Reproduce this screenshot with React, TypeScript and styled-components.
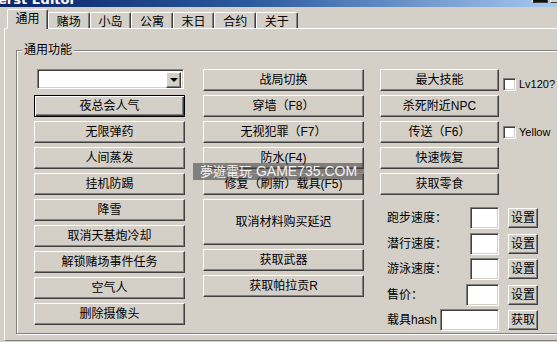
import styled, { createGlobalStyle, css } from "styled-components";

const GlobalStyle = createGlobalStyle`
  html, body {
    margin: 0;
    padding: 0;
    background: #d4d0c8;
    overflow: hidden;
  }
  body {
    font-family: "Liberation Sans", "Noto Sans CJK SC", sans-serif;
    font-size: 12px;
    color: #000;
  }
  * { box-sizing: border-box; }
`;

const cjk = `"Liberation Sans", "Noto Sans CJK SC", sans-serif`;

const Window = styled.div`
  position: relative;
  width: 557px;
  height: 342px;
  overflow: hidden;
  background: #d4d0c8;
  display: flex;
  flex-direction: column;
`;

const TitleBar = styled.div`
  flex: none;
  height: 7px;
  display: flex;
  overflow: hidden;
  background: linear-gradient(to right, #0a246a 0%, #2c5aa0 45%, #a6caf0 100%);
`;

const TitleText = styled.span`
  margin-top: -7px;
  margin-left: -2px;
  color: #fff;
  font: bold 13px/13px "DejaVu Sans", sans-serif;
  white-space: nowrap;
`;

const Captions = styled.div`
  margin-left: auto;
  margin-right: -9px;
  margin-top: -11px;
  display: flex;
  gap: 2px;
`;

const CaptionButton = styled.div<{ $dark?: boolean }>`
  width: 16px;
  height: 14px;
  background: ${(p) => (p.$dark ? "#101010" : "#d4d0c8")};
  border: 1px solid;
  border-color: #fff #404040 #404040 #fff;
`;

const Body = styled.div`
  flex: 1;
  display: flex;
  flex-direction: column;
  padding-left: 4px;
  margin-top: 2px;
`;

const TabStrip = styled.div`
  flex: none;
  height: 19px;
  display: flex;
  align-items: flex-end;
  padding-left: 3px;
`;

const Tab = styled.div<{ $active?: boolean }>`
  width: 41.6px;
  height: 16px;
  display: flex;
  align-items: center;
  justify-content: center;
  font: 12px/12px ${cjk};
  background: #d4d0c8;
  border-top: 1px solid #fff;
  border-left: 1px solid #fff;
  border-right: 1px solid #404040;
  box-shadow: inset -1px 0 0 #808080;
  border-radius: 2px 2px 0 0;
  padding-top: 2px;
  ${(p) =>
    p.$active &&
    css`
      width: 41px;
      height: 20px;
      margin-bottom: -1px;
      padding-top: 0;
      padding-bottom: 2px;
      position: relative;
      z-index: 1;
    `}
`;

const Panel = styled.div`
  flex: 1;
  margin-bottom: 1px;
  padding: 15px 0 0 11px;
  border-top: 1px solid #fff;
  border-left: 1px solid #fff;
  border-bottom: 1px solid #808080;
`;

const Group = styled.fieldset`
  margin: 0;
  padding: 13px 0 0 0;
  width: 640px;
  height: 290px;
  min-width: 0;
  border: 1px solid #808080;
  box-shadow: 1px 1px 0 #fff, inset 1px 1px 0 #fff;
`;

const Legend = styled.legend`
  margin-left: 5px;
  padding: 0 2px;
  font: 12px/12px ${cjk};
  background: #d4d0c8;
`;

const Columns = styled.div`
  display: flex;
  align-items: flex-start;
  padding-left: 17px;
`;

const Column = styled.div<{ $width: number; $offset?: number }>`
  width: ${(p) => p.$width}px;
  margin-left: ${(p) => p.$offset ?? 0}px;
  display: flex;
  flex-direction: column;
  gap: 4px;
`;

const raised = css`
  background: #d4d0c8;
  border: 1px solid;
  border-color: #fff #404040 #404040 #fff;
  box-shadow: inset -1px -1px 0 #808080;
`;

const sunken = css`
  background: #fff;
  border: 1px solid;
  border-color: #808080 #fff #fff #808080;
  box-shadow: inset 1px 1px 0 #404040, inset -1px -1px 0 #d4d0c8;
`;

const Button = styled.button<{ $default?: boolean; $tall?: boolean }>`
  ${raised};
  width: 100%;
  height: ${(p) => (p.$tall ? 46 : 22)}px;
  padding: 0;
  font: 12px/12px ${cjk};
  color: #000;
  white-space: nowrap;
  ${(p) =>
    p.$default &&
    css`
      border-color: #000;
      box-shadow: inset 1px 1px 0 #fff, inset -1px -1px 0 #404040,
        inset -2px -2px 0 #808080;
    `}
`;

const Combo = styled.div`
  ${sunken};
  width: 147px;
  height: 20px;
  margin: 0 0 2px 3px;
  display: flex;
  justify-content: flex-end;
  padding: 2px;
`;

const DropButton = styled.div`
  ${raised};
  width: 15px;
  height: 16px;
  display: flex;
  align-items: center;
  justify-content: center;

  &::after {
    content: "";
    border-left: 4px solid transparent;
    border-right: 4px solid transparent;
    border-top: 4px solid #000;
  }
`;

const RightArea = styled.div`
  margin-left: 16px;
  display: flex;
  flex-direction: column;
`;

const TopGrid = styled.div`
  display: grid;
  grid-template-columns: 119px auto;
  grid-auto-rows: 22px;
  row-gap: 4px;
  column-gap: 4px;
`;

const CheckLabel = styled.label<{ $drop?: boolean }>`
  display: flex;
  align-items: center;
  gap: 3px;
  align-self: center;
  margin-top: ${(p) => (p.$drop ? 9 : 0)}px;
  font: 11px/11px "Liberation Sans Narrow", "Liberation Sans", sans-serif;
  white-space: nowrap;
`;

const CheckBox = styled.span`
  ${sunken};
  width: 13px;
  height: 13px;
  flex: none;
`;

const Rows = styled.div`
  margin-top: 12px;
  display: flex;
  flex-direction: column;
  gap: 3.5px;
`;

const Row = styled.div`
  display: grid;
  grid-template-columns: 119px 30px;
  column-gap: 9px;
  height: 22px;
  align-items: center;
`;

const Field = styled.div`
  display: flex;
  align-items: center;
  justify-content: space-between;
  padding-left: 7px;
  font: 12px/12px ${cjk};
  white-space: nowrap;
`;

const Input = styled.div<{ $width: number }>`
  ${sunken};
  width: ${(p) => p.$width}px;
  height: 22px;
`;

const SmallButton = styled.button`
  ${raised};
  width: 30px;
  height: 20px;
  padding: 0;
  font: 12px/12px ${cjk};
  color: #000;
`;

const Watermark = styled.div`
  position: absolute;
  left: 193px;
  top: 163px;
  width: 171px;
  height: 17px;
  background: rgba(60, 60, 60, 0.55);
  color: #f2f2f2;
  font: 14px/17px "Liberation Sans", "Noto Sans CJK TC", sans-serif;
  text-align: center;
  white-space: nowrap;

  span {
    font-size: 13px;
    margin-right: 4px;
  }
`;

const tabs = ["通用", "赌场", "小岛", "公寓", "末日", "合约", "关于"];

const leftButtons = [
  "无限弹药",
  "人间蒸发",
  "挂机防踢",
  "降雪",
  "取消天基炮冷却",
  "解锁赌场事件任务",
  "空气人",
  "删除摄像头",
];

const midButtons = ["战局切换", "穿墙（F8）", "无视犯罪（F7）", "防水(F4)", "修复（刷新）载具(F5)"];

const rightButtons: { label: string; check?: string }[] = [
  { label: "最大技能", check: "Lv120?" },
  { label: "杀死附近NPC" },
  { label: "传送（F6）", check: "Yellow" },
  { label: "快速恢复" },
  { label: "获取零食" },
];

const speedRows = [
  { label: "跑步速度：", width: 29, action: "设置" },
  { label: "潜行速度：", width: 29, action: "设置" },
  { label: "游泳速度：", width: 29, action: "设置" },
  { label: "售价：", width: 33, action: "设置" },
  { label: "载具hash", width: 59, action: "获取" },
];

export default function App() {
  return (
    <Window>
      <GlobalStyle />
      <TitleBar>
        <TitleText>erst Editor</TitleText>
        <Captions>
          <CaptionButton $dark />
          <CaptionButton />
        </Captions>
      </TitleBar>
      <Body>
        <TabStrip>
          {tabs.map((t, i) => (
            <Tab key={t} $active={i === 0}>
              {t}
            </Tab>
          ))}
        </TabStrip>
        <Panel>
          <Group>
            <Legend>通用功能</Legend>
            <Columns>
              <Column $width={151}>
                <Combo>
                  <DropButton />
                </Combo>
                <Button $default>夜总会人气</Button>
                {leftButtons.map((b) => (
                  <Button key={b}>{b}</Button>
                ))}
              </Column>
              <Column $width={161} $offset={18}>
                {midButtons.map((b) => (
                  <Button key={b}>{b}</Button>
                ))}
                <Button $tall>取消材料购买延迟</Button>
                <Button>获取武器</Button>
                <Button>获取帕拉贡R</Button>
              </Column>
              <RightArea>
                <TopGrid>
                  {rightButtons.map((b, i) => (
                    <>
                      <Button key={b.label}>{b.label}</Button>
                      {b.check ? (
                        <CheckLabel key={b.check} $drop={i === 0}>
                          <CheckBox />
                          {b.check}
                        </CheckLabel>
                      ) : (
                        <span key={`empty-${i}`} />
                      )}
                    </>
                  ))}
                </TopGrid>
                <Rows>
                  {speedRows.map((r) => (
                    <Row key={r.label}>
                      <Field>
                        {r.label}
                        <Input $width={r.width} />
                      </Field>
                      <SmallButton>{r.action}</SmallButton>
                    </Row>
                  ))}
                </Rows>
              </RightArea>
            </Columns>
          </Group>
        </Panel>
      </Body>
      <Watermark>
        <span>夢遊電玩</span>GAME735.COM
      </Watermark>
    </Window>
  );
}
